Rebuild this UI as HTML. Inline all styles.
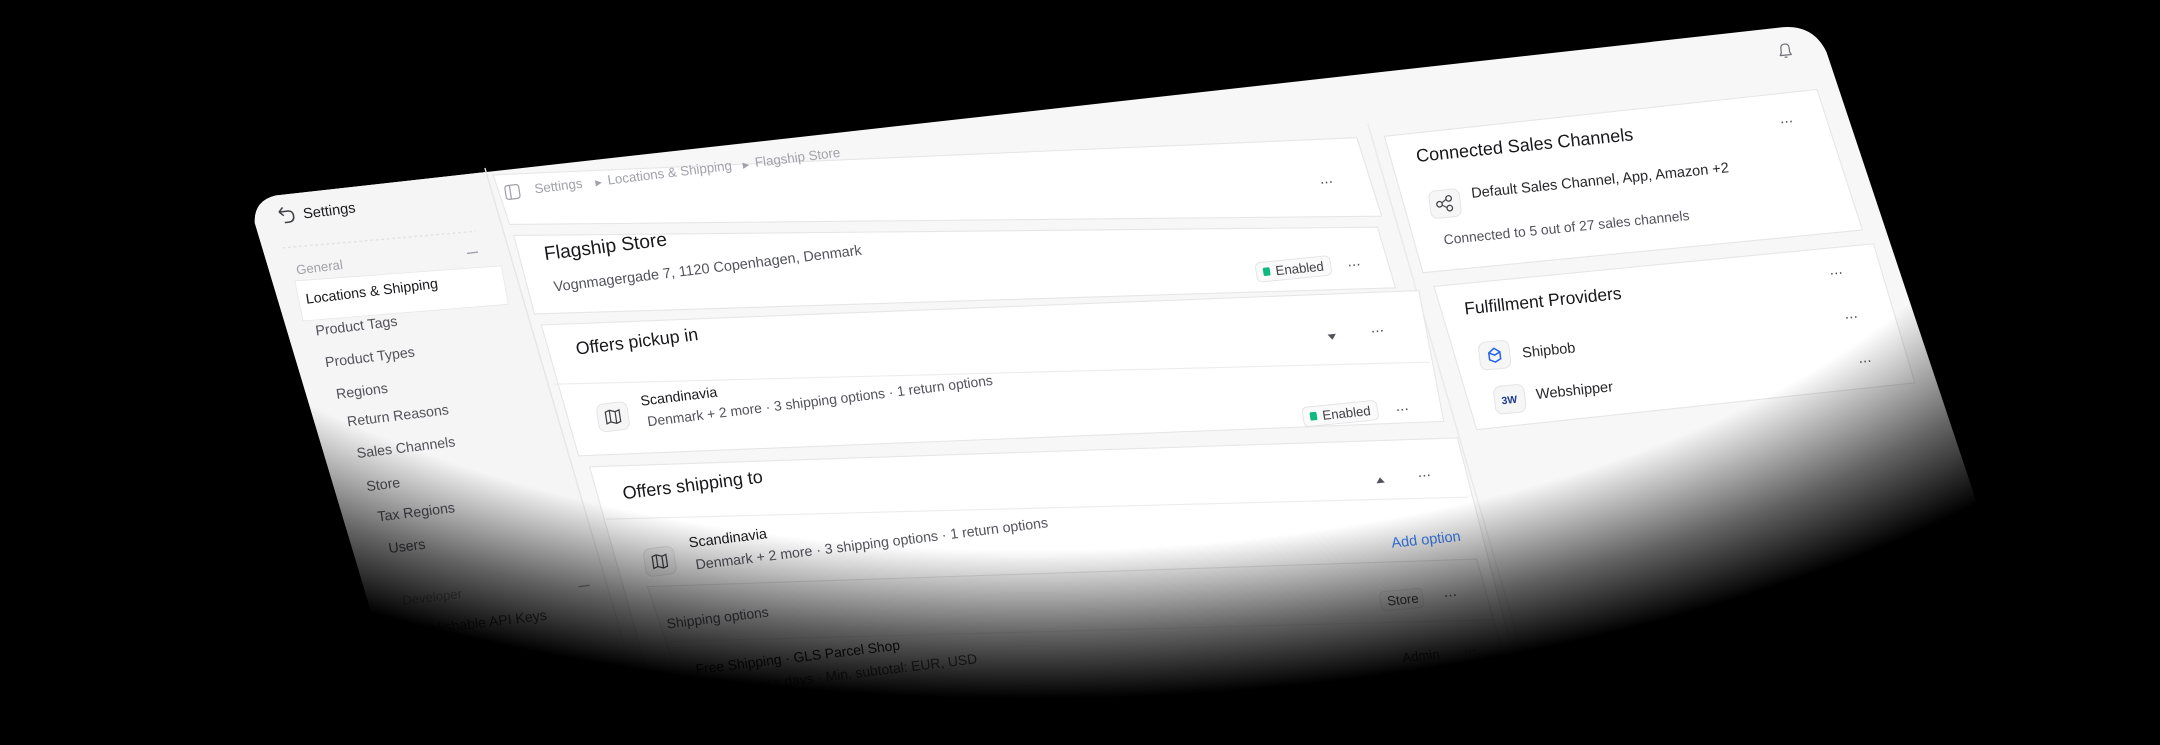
<!DOCTYPE html>
<html><head><meta charset="utf-8"><style>
html,body{margin:0;padding:0;background:#000;width:2160px;height:745px;overflow:hidden}
svg{display:block}
text{font-family:"Liberation Sans",sans-serif}
#fade{position:absolute;left:0;top:0;width:2160px;height:745px;background:radial-gradient(ellipse 1330px 645px at 1030px 60px,rgba(0,0,0,0) 0%,rgba(0,0,0,0) 76%,rgba(0,0,0,0.6) 89%,#000 99%)}
</style></head><body>
<svg width="2160" height="745" viewBox="0 0 1568 541" preserveAspectRatio="none">
<rect width="1568" height="541" fill="#000"/>
<path d="M185,162 Q184,146 200,142 L1292,20 Q1316,17 1326,38 L1500,560 L304,560 Z" fill="#f7f7f7"/>
<path d="M185,162 Q184,146 200,142 L352,125 L480,560 L304,560 Z" fill="#f5f5f5"/>
<line x1="352" y1="122" x2="480" y2="560" stroke="#e6e6e6" stroke-width="1"/>
<line x1="993" y1="90" x2="1130" y2="560" stroke="#e9e9e9" stroke-width="1"/>
<line x1="205" y1="180" x2="345" y2="168" stroke="#e2e2e2" stroke-width="1" stroke-dasharray="2 2"/>
<path d="M216,206 L362,195 L367,219 L222,231 Z" fill="#fff" stroke="#fff" stroke-width="4" stroke-linejoin="round"/>
<path d="M214,204 L364,193 L369,221 L220,233 Z" fill="none" stroke="#e8e8e8" stroke-width="0.6" stroke-linejoin="round"/>
<g fill="#fff" stroke="#e6e6e6" stroke-width="0.8" stroke-linejoin="round">
<path d="M358,127 L985,100 L1003,157 L370,163 Z"/>
<path d="M373,171 L1000,165 L1013,209 L388,228 Z"/>
<path d="M393,236 L1030,211 L1048,306 L420,331 Z"/>
<path d="M428,339 L1058,318 L1120,560 L490,560 Z"/>
<path d="M1005,99 L1319,65 L1352,167 L1033,198 Z"/>
<path d="M1041,208 L1360,177 L1390,278 L1072,312 Z"/>
</g>
<line x1="402" y1="279" x2="1038" y2="263" stroke="#ececec" stroke-width="0.8"/>
<line x1="440" y1="377" x2="1066" y2="361" stroke="#ececec" stroke-width="0.8"/>
<path d="M470,426 L1072,406 L1115,560 L515,560 Z" fill="#fafafa" stroke="#e6e6e6" stroke-width="0.8"/>
<line x1="482" y1="466" x2="1084" y2="450" stroke="#ececec" stroke-width="0.8"/>

<g transform="matrix(1,-0.12,0.15,1,203,157)"><path d="M0,-3 L3,-6 M0,-3 L3,0 M0,-3 H6 Q10,-3 10,1 Q10,5 6,5 H3" fill="none" stroke="#3f3f46" stroke-width="1.1"/></g>
<g transform="matrix(1,-0.12,0.15,1,220,155)"><text y="3.7" font-size="10.5" fill="#18181b">Settings</text></g>
<g transform="matrix(1,-0.12,0.15,1,215,196)"><text y="3.3" font-size="9.5" fill="#a1a1aa">General</text></g>
<g transform="matrix(1,-0.12,0.15,1,339,184)"><line x1="0" y1="0" x2="8" y2="0" stroke="#a1a1aa" stroke-width="1"/></g>
<g font-size="10.2" fill="#52525b">
<g transform="matrix(1,-0.12,0.15,1,222,217)"><text y="3.6" fill="#18181b">Locations &amp; Shipping</text></g>
<g transform="matrix(1,-0.12,0.15,1,229,240)"><text y="3.6">Product Tags</text></g>
<g transform="matrix(1,-0.12,0.15,1,236,263)"><text y="3.6">Product Types</text></g>
<g transform="matrix(1,-0.12,0.15,1,244,286)"><text y="3.6">Regions</text></g>
<g transform="matrix(1,-0.12,0.15,1,252,306)"><text y="3.6">Return Reasons</text></g>
<g transform="matrix(1,-0.12,0.15,1,259,329)"><text y="3.6">Sales Channels</text></g>
<g transform="matrix(1,-0.12,0.15,1,266,353)"><text y="3.6">Store</text></g>
<g transform="matrix(1,-0.12,0.15,1,274,375)"><text y="3.6">Tax Regions</text></g>
<g transform="matrix(1,-0.12,0.15,1,282,398)"><text y="3.6">Users</text></g>
<g transform="matrix(1,-0.12,0.15,1,292,436)"><text y="3.3" font-size="9.5" fill="#a1a1aa">Developer</text></g>
<g transform="matrix(1,-0.12,0.15,1,300,458)"><text y="3.6">Publishable API Keys</text></g>
<g transform="matrix(1,-0.12,0.15,1,308,480)"><text y="3.6">Secret API Keys</text></g>
<g transform="matrix(1,-0.12,0.15,1,316,502)"><text y="3.6">Workflows</text></g>
</g>
<g transform="matrix(1,-0.12,0.15,1,420,426)"><line x1="0" y1="0" x2="8" y2="0" stroke="#a1a1aa" stroke-width="1"/></g>

<g transform="matrix(1,-0.12,0.15,1,367,140)"><rect x="0" y="-5" width="10" height="10" rx="2" fill="none" stroke="#a1a1aa" stroke-width="0.9"/><line x1="3.5" y1="-5" x2="3.5" y2="5" stroke="#a1a1aa" stroke-width="0.9"/></g>
<g transform="matrix(1,-0.12,0.15,1,388,137)" font-size="9.6" fill="#a1a1aa"><text y="3.4">Settings</text><text x="44" y="3" font-size="6">▶</text><text x="53" y="3.4">Locations &amp; Shipping</text><text x="151" y="3" font-size="6">▶</text><text x="160" y="3.4">Flagship Store</text></g>
<g transform="matrix(1,-0.1,0.15,1,958,133)"><text y="3" font-size="11" fill="#52525b" letter-spacing="-0.5">···</text></g>

<g transform="matrix(1,-0.12,0.15,1,395,184)"><text y="4.8" font-size="13.8" fill="#18181b">Flagship Store</text></g>
<g transform="matrix(1,-0.12,0.15,1,402,208)"><text y="3.7" font-size="10.4" fill="#52525b">Vognmagergade 7, 1120 Copenhagen, Denmark</text></g>
<g transform="matrix(1,-0.1,0.15,1,912,198)"><rect x="0" y="-7" width="54" height="14" rx="3.5" fill="#fafafa" stroke="#e4e4e7" stroke-width="0.7"/><rect x="5" y="-3" width="5" height="6" rx="1" fill="#10b981"/><text x="14" y="3.3" font-size="9.5" fill="#3f3f46">Enabled</text></g>
<g transform="matrix(1,-0.1,0.15,1,978,193)"><text y="3" font-size="11" fill="#52525b" letter-spacing="-0.5">···</text></g>

<g transform="matrix(1,-0.12,0.15,1,418,253)"><text y="4.5" font-size="12.8" fill="#18181b">Offers pickup in</text></g>
<g transform="matrix(1,-0.1,0.15,1,964,245)"><path d="M0,-2 L6,-2 L3,2 Z" fill="#52525b"/></g>
<g transform="matrix(1,-0.1,0.15,1,995,241)"><text y="3" font-size="11" fill="#52525b" letter-spacing="-0.5">···</text></g>
<g transform="matrix(1,-0.12,0.15,1,434,304)"><rect x="0" y="-10" width="22" height="20" rx="5" fill="#f6f6f6" stroke="#e4e4e7" stroke-width="0.7"/><path d="M6,-4 L9,-5 L13,-3.5 L16,-4.5 V4 L13,5 L9,3.5 L6,4.5 Z M9,-5 V3.5 M13,-3.5 V5" fill="none" stroke="#3f3f46" stroke-width="0.9"/></g>
<g transform="matrix(1,-0.12,0.15,1,465,291)"><text y="3.6" font-size="10.2" fill="#18181b">Scandinavia</text></g>
<g transform="matrix(1,-0.12,0.15,1,470,306)"><text y="3.5" font-size="10" fill="#52525b">Denmark + 2 more  ·  3 shipping options  ·  1 return options</text></g>
<g transform="matrix(1,-0.1,0.15,1,946,303)"><rect x="0" y="-7" width="54" height="14" rx="3.5" fill="#fafafa" stroke="#e4e4e7" stroke-width="0.7"/><rect x="5" y="-3" width="5" height="6" rx="1" fill="#10b981"/><text x="14" y="3.3" font-size="9.5" fill="#3f3f46">Enabled</text></g>
<g transform="matrix(1,-0.1,0.15,1,1013,298)"><text y="3" font-size="11" fill="#52525b" letter-spacing="-0.5">···</text></g>

<g transform="matrix(1,-0.12,0.15,1,452,358)"><text y="4.5" font-size="13" fill="#18181b">Offers shipping to</text></g>
<g transform="matrix(1,-0.1,0.15,1,999,349)"><path d="M0,2 L6,2 L3,-2 Z" fill="#52525b"/></g>
<g transform="matrix(1,-0.1,0.15,1,1029,346)"><text y="3" font-size="11" fill="#52525b" letter-spacing="-0.5">···</text></g>
<g transform="matrix(1,-0.12,0.15,1,468,409)"><rect x="0" y="-10" width="22" height="20" rx="5" fill="#f6f6f6" stroke="#e4e4e7" stroke-width="0.7"/><path d="M6,-4 L9,-5 L13,-3.5 L16,-4.5 V4 L13,5 L9,3.5 L6,4.5 Z M9,-5 V3.5 M13,-3.5 V5" fill="none" stroke="#3f3f46" stroke-width="0.9"/></g>
<g transform="matrix(1,-0.12,0.15,1,500,394)"><text y="3.6" font-size="10.4" fill="#18181b">Scandinavia</text></g>
<g transform="matrix(1,-0.12,0.15,1,505,410)"><text y="3.5" font-size="10.2" fill="#52525b">Denmark + 2 more  ·  3 shipping options  ·  1 return options</text></g>
<g transform="matrix(1,-0.1,0.15,1,1010,394)"><text y="3.7" font-size="10.5" fill="#3b82f6">Add option</text></g>
<g transform="matrix(1,-0.12,0.15,1,484,453)"><text y="3.5" font-size="10" fill="#52525b">Shipping options</text></g>
<g transform="matrix(1,-0.1,0.15,1,1002,437)"><rect x="0" y="-7" width="31" height="14" rx="3.5" fill="#f4f4f5" stroke="#e4e4e7" stroke-width="0.7"/><text x="5" y="3.3" font-size="9.5" fill="#3f3f46">Store</text></g>
<g transform="matrix(1,-0.1,0.15,1,1048,433)"><text y="3" font-size="11" fill="#52525b" letter-spacing="-0.5">···</text></g>
<g transform="matrix(1,-0.12,0.15,1,505,486)"><text y="3.5" font-size="10" fill="#18181b">Free Shipping · GLS Parcel Shop</text></g>
<g transform="matrix(1,-0.12,0.15,1,510,502)"><text y="3.5" font-size="10" fill="#52525b">1-3 business days  ·  Min. subtotal: EUR, USD</text></g>
<g transform="matrix(1,-0.1,0.15,1,1014,478)"><rect x="0" y="-7" width="34" height="14" rx="3.5" fill="#f4f4f5"/><text x="4" y="3.3" font-size="9.5" fill="#3f3f46">Admin</text></g>
<g transform="matrix(1,-0.1,0.15,1,1062,473)"><text y="3" font-size="11" fill="#52525b" letter-spacing="-0.5">···</text></g>

<g transform="matrix(1,-0.1,0.12,1,1296,37)"><path d="M-4,3 L-3,1 V-2 Q-3,-5 0,-5 Q3,-5 3,-2 V1 L4,3 Z M-1,4.5 H1" fill="none" stroke="#71717a" stroke-width="0.9" stroke-linejoin="round"/></g>
<g transform="matrix(1,-0.1,0.12,1,1028,113)"><text y="4.6" font-size="13" fill="#18181b">Connected Sales Channels</text></g>
<g transform="matrix(1,-0.1,0.12,1,1292,89)"><text y="3" font-size="11" fill="#52525b" letter-spacing="-0.5">···</text></g>
<g transform="matrix(1,-0.1,0.12,1,1038,149)"><rect x="0" y="-10" width="22" height="20" rx="5" fill="#f6f6f6" stroke="#e4e4e7" stroke-width="0.7"/><circle cx="7" cy="0" r="2" fill="none" stroke="#3f3f46" stroke-width="0.9"/><circle cx="14" cy="-3.5" r="2" fill="none" stroke="#3f3f46" stroke-width="0.9"/><circle cx="14" cy="3.5" r="2" fill="none" stroke="#3f3f46" stroke-width="0.9"/><path d="M9,-1 L12,-3 M9,1 L12,3" stroke="#3f3f46" stroke-width="0.8"/></g>
<g transform="matrix(1,-0.1,0.12,1,1068,140)"><text y="3.7" font-size="10.5" fill="#27272a">Default Sales Channel, App, Amazon +2</text></g>
<g transform="matrix(1,-0.1,0.12,1,1048,174)"><text y="3.5" font-size="10" fill="#52525b">Connected to 5 out of 27 sales channels</text></g>
<g transform="matrix(1,-0.1,0.12,1,1328,199)"><text y="3" font-size="11" fill="#52525b" letter-spacing="-0.5">···</text></g>
<g transform="matrix(1,-0.1,0.12,1,1063,224)"><text y="4.4" font-size="12.6" fill="#18181b">Fulfillment Providers</text></g>
<g transform="matrix(1,-0.1,0.12,1,1339,231)"><text y="3" font-size="11" fill="#52525b" letter-spacing="-0.5">···</text></g>
<g transform="matrix(1,-0.1,0.12,1,1074,259)"><rect x="0" y="-10" width="22" height="20" rx="5" fill="#f6f6f6" stroke="#e4e4e7" stroke-width="0.7"/><path d="M7,-2 L11,-5 L15,-2 V3 L11,5 L7,3 Z M7,-2 L11,0 L15,-2" fill="none" stroke="#2563eb" stroke-width="1.1"/></g>
<g transform="matrix(1,-0.1,0.12,1,1105,256)"><text y="3.7" font-size="10.5" fill="#27272a">Shipbob</text></g>
<g transform="matrix(1,-0.1,0.12,1,1349,263)"><text y="3" font-size="11" fill="#52525b" letter-spacing="-0.5">···</text></g>
<g transform="matrix(1,-0.1,0.12,1,1085,291)"><rect x="0" y="-10" width="22" height="20" rx="5" fill="#f6f6f6" stroke="#e4e4e7" stroke-width="0.7"/><text x="5" y="3" font-size="7.5" font-weight="bold" fill="#1e3a8a">3W</text></g>
<g transform="matrix(1,-0.1,0.12,1,1115,286)"><text y="3.7" font-size="10.5" fill="#27272a">Webshipper</text></g>
</svg>
<div id="fade"></div>
</body></html>
